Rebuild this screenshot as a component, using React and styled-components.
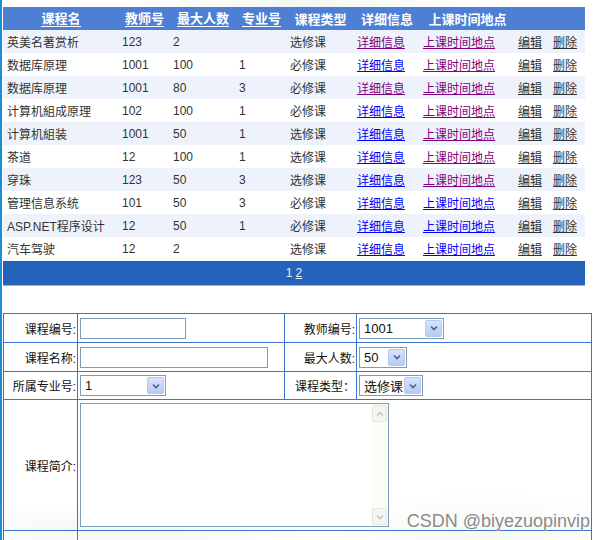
import React from 'react';
import styled, { createGlobalStyle } from 'styled-components';

const GlobalStyle = createGlobalStyle`
  html, body, #root {
    margin: 0;
    padding: 0;
    height: 100%;
  }
  body {
    font-family: "Liberation Sans", "Noto Sans CJK SC", sans-serif;
    font-size: 12px;
    color: #333;
    background: #fff;
  }
`;

const Page = styled.div`
  position: relative;
  height: 540px;
  box-sizing: border-box;
  border-left: 2px solid #1a8ed6;
  padding: 7px 0 0 1px;
  overflow: hidden;
  background:
    radial-gradient(ellipse 160px 40px at 300px 10px, #f1f6ef 0, rgba(255,255,255,0) 100%),
    radial-gradient(ellipse 200px 30px at 120px 530px, #f3f7f2 0, rgba(255,255,255,0) 100%),
    radial-gradient(ellipse 160px 40px at 480px 530px, #f5f8f4 0, rgba(255,255,255,0) 100%),
    #fff;
`;

const Grid = styled.table`
  width: 582px;
  border-collapse: collapse;
  table-layout: fixed;
`;

const HeadRow = styled.tr`
  background: #4d7fd4;
  height: 23px;
`;

const HeadCell = styled.th`
  color: #fff;
  font-size: 13px;
  font-weight: bold;
  text-align: center;
  padding: 0;
  white-space: nowrap;
`;

const HeadLink = styled.a`
  display: inline-block;
  color: #fff;
  line-height: 15px;
  border-bottom: 1px solid #fff;
  cursor: pointer;
`;

const Row = styled.tr`
  height: 23px;
  background: ${p => (p.$alt ? '#eef3fb' : '#fff')};
`;

const Cell = styled.td`
  padding: 0 0 0 ${p => (p.$first ? 4 : 3)}px;
  white-space: nowrap;
  color: #333;
  font-size: 12px;
`;

const Link = styled.a`
  color: ${p => (p.$visited ? '#800080' : '#0000ff')};
  text-decoration: underline;
  cursor: pointer;
`;

const Action = styled.a`
  color: #333;
  text-decoration: underline;
  cursor: pointer;
`;

const Pager = styled.div`
  width: 582px;
  height: 24px;
  margin-top: 1px;
  background: #2563bb;
  border-bottom: 1px solid #8fb0e2;
  color: #e8eefa;
  font-size: 12px;
  display: flex;
  align-items: center;
  justify-content: center;
  gap: 3px;
`;

const PageLink = styled.span`
  text-decoration: ${p => (p.$link ? 'underline' : 'none')};
`;

const Form = styled.table`
  margin-top: 27px;
  width: 588px;
  border-collapse: collapse;
  table-layout: fixed;
  border: 1px solid #3b73d0;
`;

const FormRow = styled.tr`
  height: ${p => p.$h}px;
  border-top: 1px solid #3b73d0;
`;

const Label = styled.td`
  text-align: right;
  padding: 0 1px 0 0;
  color: #111;
  font-size: 12px;
  white-space: nowrap;
  border-right: 1px solid #3b73d0;
`;

const Field = styled.td`
  padding: 0 0 0 2px;
  border-right: ${p => (p.$last ? 'none' : '1px solid #3b73d0')};
  vertical-align: middle;
`;

const TextInput = styled.input`
  box-sizing: border-box;
  width: ${p => p.$w}px;
  height: 21px;
  border: 1px solid #7f9db9;
  padding: 0 3px;
  font: 12px "Liberation Sans", "Noto Sans CJK SC", sans-serif;
  display: block;
`;

const SelectBox = styled.div`
  box-sizing: border-box;
  width: ${p => p.$w}px;
  height: 21px;
  border: 1px solid #7f9db9;
  background: #fff;
  display: flex;
  align-items: center;
  font-size: 13px;
  color: #111;
`;

const SelectValue = styled.span`
  flex: 1;
  padding-left: 4px;
`;

const ArrowButton = styled.span`
  box-sizing: border-box;
  width: 17px;
  height: 17px;
  margin-right: 1px;
  border: 1px solid #b5c9f3;
  border-radius: 2px;
  background: linear-gradient(#d6e2fd, #b7cbf7);
  display: flex;
  align-items: center;
  justify-content: center;
`;

const Chevron = ({ up, color = '#4d6185' }) => (
  <svg width="8" height="6" viewBox="0 0 8 6">
    <path d={up ? 'M1 4.5 L4 1.5 L7 4.5' : 'M1 1.5 L4 4.5 L7 1.5'} fill="none" stroke={color} strokeWidth="1.6" />
  </svg>
);

const Select = ({ w, value }) => (
  <SelectBox $w={w}>
    <SelectValue>{value}</SelectValue>
    <ArrowButton>
      <Chevron />
    </ArrowButton>
  </SelectBox>
);

const AreaBox = styled.div`
  box-sizing: border-box;
  width: 309px;
  height: 124px;
  border: 1px solid #7f9db9;
  display: flex;
  background: #fff;
`;

const Area = styled.textarea`
  flex: 1;
  border: none;
  resize: none;
  outline: none;
  font: 12px "Liberation Sans", "Noto Sans CJK SC", sans-serif;
`;

const Track = styled.div`
  width: 17px;
  background: #fcfcf8;
  display: flex;
  flex-direction: column;
  justify-content: space-between;
`;

const TrackButton = styled.span`
  box-sizing: border-box;
  height: 17px;
  margin: 1px;
  border: 1px solid #e6e6dc;
  border-radius: 2px;
  background: #f5f5ee;
  display: flex;
  align-items: center;
  justify-content: center;
`;

const Watermark = styled.div`
  position: absolute;
  right: 3px;
  bottom: 8px;
  font: 18px "Liberation Sans", sans-serif;
  color: #8a8a8a;
  text-shadow: 0 0 2px #fff;
`;

const courses = [
  ['英美名著赏析', '123', '2', '', '选修课', true, true],
  ['数据库原理', '1001', '100', '1', '必修课', false, true],
  ['数据库原理', '1001', '80', '3', '必修课', true, true],
  ['计算机組成原理', '102', '100', '1', '必修课', false, true],
  ['计算机組装', '1001', '50', '1', '选修课', false, true],
  ['茶道', '12', '100', '1', '选修课', false, true],
  ['穿珠', '123', '50', '3', '选修课', false, true],
  ['管理信息系统', '101', '50', '3', '必修课', false, false],
  ['ASP.NET程序设计', '12', '50', '1', '必修课', false, false],
  ['汽车驾驶', '12', '2', '', '选修课', false, false],
];

const widths = [116, 51, 66, 51, 67, 66, 95, 35, 35];

export default function App() {
  return (
    <Page>
      <GlobalStyle />
      <Grid>
        <colgroup>
          {widths.map((w, i) => <col key={i} style={{ width: w }} />)}
        </colgroup>
        <thead>
          <HeadRow>
            <HeadCell><HeadLink>课程名</HeadLink></HeadCell>
            <HeadCell><HeadLink>教师号</HeadLink></HeadCell>
            <HeadCell><HeadLink>最大人数</HeadLink></HeadCell>
            <HeadCell><HeadLink>专业号</HeadLink></HeadCell>
            <HeadCell>课程类型</HeadCell>
            <HeadCell>详细信息</HeadCell>
            <HeadCell>上课时间地点</HeadCell>
            <HeadCell />
            <HeadCell />
          </HeadRow>
        </thead>
        <tbody>
          {courses.map(([name, teacher, max, major, type, v1, v2], i) => (
            <Row key={i} $alt={i % 2 === 0}>
              <Cell $first>{name}</Cell>
              <Cell>{teacher}</Cell>
              <Cell>{max}</Cell>
              <Cell>{major}</Cell>
              <Cell>{type}</Cell>
              <Cell><Link $visited={v1}>详细信息</Link></Cell>
              <Cell><Link $visited={v2}>上课时间地点</Link></Cell>
              <Cell><Action>编辑</Action></Cell>
              <Cell><Action>删除</Action></Cell>
            </Row>
          ))}
        </tbody>
      </Grid>
      <Pager>
        <PageLink>1</PageLink>
        <PageLink $link>2</PageLink>
      </Pager>

      <Form>
        <colgroup>
          <col style={{ width: 74 }} />
          <col style={{ width: 207 }} />
          <col style={{ width: 72 }} />
          <col style={{ width: 235 }} />
        </colgroup>
        <tbody>
          <FormRow $h={29}>
            <Label>课程编号:</Label>
            <Field><TextInput $w={106} /></Field>
            <Label>教师编号:</Label>
            <Field $last><Select w={85} value="1001" /></Field>
          </FormRow>
          <FormRow $h={29}>
            <Label>课程名称:</Label>
            <Field><TextInput $w={188} /></Field>
            <Label>最大人数:</Label>
            <Field $last><Select w={48} value="50" /></Field>
          </FormRow>
          <FormRow $h={28}>
            <Label>所属专业号:</Label>
            <Field><Select w={86} value="1" /></Field>
            <Label>课程类型：</Label>
            <Field $last><Select w={64} value="选修课" /></Field>
          </FormRow>
          <FormRow $h={131}>
            <Label>课程简介:</Label>
            <Field colSpan={3} $last>
              <AreaBox>
                <Area />
                <Track>
                  <TrackButton><Chevron up color="#c4c4bc" /></TrackButton>
                  <TrackButton><Chevron color="#c4c4bc" /></TrackButton>
                </Track>
              </AreaBox>
            </Field>
          </FormRow>
          <FormRow $h={20}>
            <Label />
            <Field colSpan={3} $last />
          </FormRow>
        </tbody>
      </Form>
      <Watermark>CSDN @biyezuopinvip</Watermark>
    </Page>
  );
}
